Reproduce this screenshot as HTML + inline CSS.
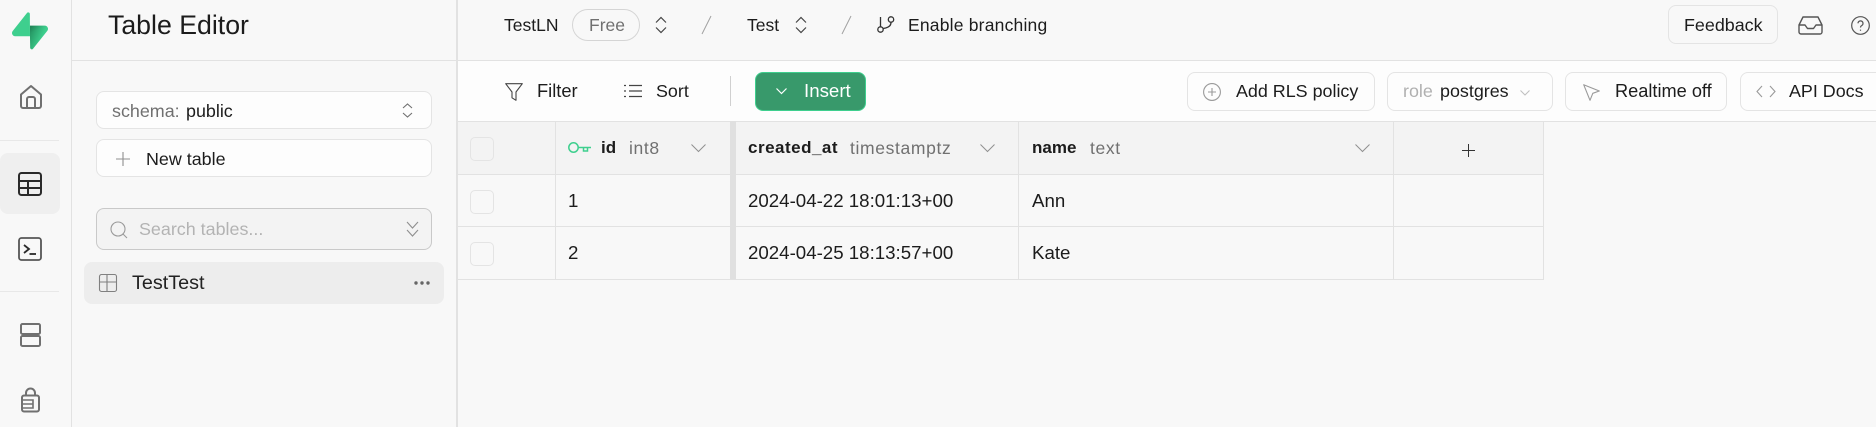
<!DOCTYPE html>
<html lang="en"><head><meta charset="utf-8"><title>Table Editor</title>
<style>
html,body{margin:0;padding:0;width:1876px;height:427px;overflow:hidden;background:#f8f8f8}
body{position:relative;font-family:"Liberation Sans",Arial,sans-serif;color:#1c1c1c;font-size:17.9px}
.a{position:absolute;box-sizing:border-box}
.t{position:absolute;white-space:nowrap;line-height:30px;height:30px}
.b{position:absolute;box-sizing:border-box;background:#fdfdfd;border:1px solid #e4e4e4;border-radius:8px}
.l{position:absolute;background:#e2e2e2}
.g{color:#707070}
.h{font-size:17.5px;letter-spacing:.64px}
.r{font-size:18.7px}
svg{position:absolute;overflow:visible;fill:none}
</style></head><body>

<!-- regions -->
<div class="a" style="left:457px;top:61px;width:1419px;height:60px;background:#fdfdfd"></div>
<div class="l" style="left:71px;top:0;width:1px;height:427px"></div>
<div class="l" style="left:456px;top:0;width:1.5px;height:427px"></div>
<div class="l" style="left:72px;top:60px;width:1804px;height:1px"></div>

<!-- nav -->
<svg style="left:12px;top:12px" width="36" height="38" viewBox="0 0 109 113">
<defs><linearGradient id="g1" x1="53.97" y1="54.97" x2="94.16" y2="71.83" gradientUnits="userSpaceOnUse"><stop stop-color="#249361"/><stop offset="1" stop-color="#3ECF8E"/></linearGradient>
<linearGradient id="g2" x1="36.15" y1="30.58" x2="54.48" y2="65.08" gradientUnits="userSpaceOnUse"><stop/><stop offset="1" stop-opacity="0"/></linearGradient></defs>
<path d="M63.7 110.3C60.8 113.9 55.05 111.9 54.98 107.3L53.97 40.06H99.19C107.38 40.06 111.95 49.52 106.86 55.94Z" fill="url(#g1)"/>
<path d="M63.7 110.3C60.8 113.9 55.05 111.9 54.98 107.3L53.97 40.06H99.19C107.38 40.06 111.95 49.52 106.86 55.94Z" fill="url(#g2)" fill-opacity=".2"/>
<path d="M45.32 2.07C48.18-1.53 53.97.44 54.04 5.04L54.48 72.29H9.83C1.64 72.29-2.93 62.83 2.17 56.42Z" fill="#3ECF8E"/>
</svg>
<svg style="left:19px;top:84px" width="24" height="26" viewBox="0 0 24 26" stroke="#707070" stroke-width="2" stroke-linejoin="round"><path d="M2 10.5 12 2l10 8.5V22a2 2 0 0 1-2 2H4a2 2 0 0 1-2-2Z"/><path d="M8 24V15a2 2 0 0 1 2-2h4a2 2 0 0 1 2 2v9"/></svg>
<div class="l" style="left:0;top:139.5px;width:59px;height:1px;background:#e8e8e8"></div>
<div class="a" style="left:0;top:153px;width:60px;height:61px;background:#efefef;border-radius:8px"></div>
<svg style="left:18px;top:172px" width="24" height="24" viewBox="0 0 24 24" stroke="#2a2a2a" stroke-width="2"><rect x="1" y="1" width="22" height="22" rx="2.5"/><path d="M1 9h22M1 16h22M10 9v14"/></svg>
<svg style="left:18px;top:237px" width="24" height="24" viewBox="0 0 24 24" stroke="#555" stroke-width="1.8"><rect x="1" y="1" width="22" height="22" rx="2.5"/><path d="m6 8 5 4-5 4" stroke="#2a2a2a"/><path d="M11.5 17H18" stroke="#2a2a2a"/></svg>
<div class="l" style="left:0;top:291px;width:59px;height:1px;background:#e8e8e8"></div>
<svg style="left:20px;top:323px" width="21" height="24" viewBox="0 0 21 24" stroke="#707070" stroke-width="2"><rect x="1" y="1" width="19" height="10" rx="1.5"/><rect x="1" y="13" width="19" height="10" rx="1.5"/></svg>
<svg style="left:21px;top:387px" width="19" height="26" viewBox="0 0 19 26" stroke="#707070" stroke-width="2"><path d="M5 9V6a4.5 4.5 0 0 1 9 0v3"/><rect x="1" y="8.500" width="17" height="16" rx="2"/><path d="M1 13h11v8H1M1 17h11" stroke-width="1.600"/></svg>

<!-- sidebar -->
<div class="t" style="left:108px;top:10px;font-size:26.7px">Table Editor</div>
<div class="b" style="left:96px;top:91px;width:336px;height:38px"></div>
<div class="t g" style="left:112px;top:96px">schema:</div>
<div class="t" style="left:186px;top:96px">public</div>
<svg style="left:402px;top:103px" width="11" height="15" viewBox="0 0 11 15" stroke="#707070" stroke-width="1.100"><path d="m1 5 4.500-4L10 5M1 10l4.500 4 4.500-4"/></svg>
<div class="b" style="left:96px;top:139px;width:336px;height:38px"></div>
<svg style="left:116px;top:152px" width="14" height="14" stroke="#8f8f8f" stroke-width="1.100"><path d="M7 0v14M0 7h14"/></svg>
<div class="t" style="left:146px;top:144px">New table</div>
<div class="b" style="left:96px;top:208px;width:336px;height:42px;background:#f3f3f3;border-color:#c9c9c9"></div>
<svg style="left:110px;top:221px" width="18" height="18" viewBox="0 0 18 18" stroke="#9a9a9a" stroke-width="1.100"><circle cx="8" cy="8" r="7"/><path d="m13 13 4 4"/></svg>
<div class="t" style="left:139px;top:214px;color:#b3b3b3">Search tables...</div>
<svg style="left:406px;top:221px" width="13" height="16" viewBox="0 0 13 16" stroke="#8f8f8f" stroke-width="1.100"><path d="m1 1 5.500 6L12 1M1 9l5.500 6L12 9"/></svg>
<div class="a" style="left:84px;top:262px;width:360px;height:42px;background:#ededed;border-radius:8px"></div>
<svg style="left:99px;top:274px" width="18" height="18" viewBox="0 0 18 18" stroke="#808080" stroke-width="1.100"><rect x=".5" y=".5" width="17" height="17" rx="2"/><path d="M.5 8h17M8 .5v17"/></svg>
<div class="t" style="left:132px;top:268px;font-size:19.800px;color:#222">TestTest</div>
<svg style="left:414px;top:281px" width="16" height="4" fill="#666"><circle cx="2" cy="2" r="1.700" fill="#666"/><circle cx="8" cy="2" r="1.700" fill="#666"/><circle cx="14" cy="2" r="1.700" fill="#666"/></svg>

<!-- top bar -->
<div class="t" style="left:504px;top:10px;font-size:17.5px">TestLN</div>
<div class="a" style="left:572px;top:9px;width:68px;height:32px;border:1px solid #d5d5d5;border-radius:16px"></div>
<div class="t g" style="left:589px;top:10px;font-size:17.5px">Free</div>
<svg style="left:655px;top:17px" width="12" height="16" viewBox="0 0 12 16" stroke="#444" stroke-width="1.200"><path d="m1 5.500 5-5 5 5M1 10.500l5 5 5-5"/></svg>
<svg style="left:702px;top:16px" width="9" height="18" stroke="#a0a0a0" stroke-width="1"><path d="M9 0 0 18"/></svg>
<div class="t" style="left:747px;top:10px;font-size:17.5px">Test</div>
<svg style="left:795px;top:17px" width="12" height="16" viewBox="0 0 12 16" stroke="#444" stroke-width="1.200"><path d="m1 5.500 5-5 5 5M1 10.500l5 5 5-5"/></svg>
<svg style="left:842px;top:16px" width="9" height="18" stroke="#a0a0a0" stroke-width="1"><path d="M9 0 0 18"/></svg>
<svg style="left:877px;top:16px" width="18" height="17" viewBox="0 0 18 17" stroke="#333" stroke-width="1.300"><circle cx="3.500" cy="13.500" r="2.700"/><circle cx="14" cy="3.500" r="2.700"/><path d="M3.500 10.500V1M14 6.500c0 4-4 5.500-8 6"/></svg>
<div class="t" style="left:908px;top:10px;font-size:17.5px;letter-spacing:.2px">Enable branching</div>
<div class="b" style="left:1668px;top:5px;width:110px;height:39px;background:#f8f8f8;border-radius:8px"></div>
<div class="t" style="left:1684px;top:10px">Feedback</div>
<svg style="left:1798px;top:16px" width="25" height="19" viewBox="0 0 25 19" stroke="#555" stroke-width="1.400" stroke-linejoin="round"><path d="M1 9 5 1h15l4 8v7a2 2 0 0 1-2 2H3a2 2 0 0 1-2-2Z"/><path d="M1 9h6l2.500 3.500h6L18 9h6"/></svg>
<svg style="left:1851px;top:16px" width="19" height="19" viewBox="0 0 19 19" stroke="#555" stroke-width="1.200"><circle cx="9.500" cy="9.500" r="8.800"/><path d="M7 7.300a2.500 2.500 0 1 1 3.800 2.200c-.9.500-1.300 1-1.300 2"/><path d="M9.500 13.600v1.200"/></svg>

<!-- toolbar -->
<svg style="left:505px;top:83px" width="18" height="18" viewBox="0 0 18 18" stroke="#444" stroke-width="1.100" stroke-linejoin="round"><path d="M.7.700h16.600L11 9v8.300L7 14.800V9Z"/></svg>
<div class="t" style="left:537px;top:76px;font-size:18.3px">Filter</div>
<svg style="left:624px;top:84px" width="18" height="14" stroke="#444" stroke-width="1.200"><path d="M5 1.500h13M5 7h13M5 12.500h13M0 1.500h2M0 7h2M0 12.500h2"/></svg>
<div class="t" style="left:656px;top:76px">Sort</div>
<div class="l" style="left:730px;top:76px;width:1px;height:30px;background:#d0d0d0"></div>
<div class="a" style="left:755px;top:72px;width:111px;height:39px;background:#38996b;border:1px solid #3ecf8e;border-radius:8px"></div>
<svg style="left:776px;top:88px" width="11" height="7" stroke="#fff" stroke-width="1.200"><path d="m.5.500 5 5 5-5"/></svg>
<div class="t" style="left:804px;top:76px;color:#fff;font-size:18.7px">Insert</div>

<div class="b" style="left:1187px;top:72px;width:188px;height:39px"></div>
<svg style="left:1203px;top:83px" width="18" height="18" viewBox="0 0 18 18" stroke="#9a9a9a" stroke-width="1.100"><circle cx="9" cy="9" r="8.400"/><path d="M9 5v8M5 9h8"/></svg>
<div class="t" style="left:1236px;top:76px">Add RLS policy</div>
<div class="b" style="left:1387px;top:72px;width:166px;height:39px"></div>
<div class="t" style="left:1403px;top:76px;color:#b0b0b0">role</div>
<div class="t" style="left:1440px;top:76px">postgres</div>
<svg style="left:1520px;top:90px" width="10" height="6" stroke="#c0c0c0" stroke-width="1.100"><path d="m.5.500 4.500 4.500L9.500.500"/></svg>
<div class="b" style="left:1565px;top:72px;width:162px;height:39px"></div>
<svg style="left:1583px;top:84px" width="17" height="17" viewBox="0 0 17 17" stroke="#9a9a9a" stroke-width="1.100" stroke-linejoin="round"><path d="M.7.700 16.300 7l-6.500 2.300L7 16.300Z"/></svg>
<div class="t" style="left:1615px;top:76px;font-size:18.2px">Realtime off</div>
<div class="b" style="left:1740px;top:72px;width:150px;height:39px"></div>
<svg style="left:1756px;top:85px" width="20" height="13" stroke="#9a9a9a" stroke-width="1.100"><path d="M6 1 1 6.500 6 12M14 1l5 5.500L14 12"/></svg>
<div class="t" style="left:1789px;top:76px">API Docs</div>

<!-- table -->
<div class="a" style="left:458px;top:122px;width:1085px;height:53px;background:#f3f3f3"></div>
<div class="l" style="left:457px;top:121px;width:1419px;height:1px"></div>
<div class="l" style="left:458px;top:174px;width:1086px;height:1px"></div>
<div class="l" style="left:458px;top:226px;width:1086px;height:1px"></div>
<div class="l" style="left:458px;top:278.500px;width:1086px;height:1px"></div>
<div class="l" style="left:555px;top:121px;width:1px;height:158px"></div>
<div class="l" style="left:730px;top:121px;width:6px;height:158px;background:#e0e0e0"></div>
<div class="l" style="left:1018px;top:121px;width:1px;height:158px"></div>
<div class="l" style="left:1393px;top:121px;width:1px;height:158px"></div>
<div class="l" style="left:1543px;top:121px;width:1px;height:158px"></div>
<div class="b" style="left:470px;top:137px;width:24px;height:24px;background:#f3f3f3;border-radius:5px"></div>
<div class="b" style="left:470px;top:190px;width:24px;height:24px;background:#f8f8f8;border-radius:5px"></div>
<div class="b" style="left:470px;top:242px;width:24px;height:24px;background:#f8f8f8;border-radius:5px"></div>

<svg style="left:568px;top:142px" width="23" height="12" viewBox="0 0 23 12" stroke="#3ecf8e" stroke-width="1.500"><circle cx="5.500" cy="5.500" r="4.700"/><path d="M10 5.500h13M15.500 5.500v3.500h4V5.500"/></svg>
<div class="t" style="left:601px;top:133px;font-size:17px;font-weight:700">id</div>
<div class="t g h" style="left:629px;top:133px">int8</div>
<svg style="left:691px;top:144px" width="15" height="8" stroke="#8f8f8f" stroke-width="1"><path d="m.5.500 7 7 7-7"/></svg>
<div class="t" style="left:748px;top:133px;font-size:17px;font-weight:700;letter-spacing:.5px">created_at</div>
<div class="t g h" style="left:850px;top:133px">timestamptz</div>
<svg style="left:980px;top:144px" width="15" height="8" stroke="#8f8f8f" stroke-width="1"><path d="m.5.500 7 7 7-7"/></svg>
<div class="t" style="left:1032px;top:133px;font-size:17px;font-weight:700">name</div>
<div class="t g h" style="left:1090px;top:133px">text</div>
<svg style="left:1355px;top:144px" width="15" height="8" stroke="#8f8f8f" stroke-width="1"><path d="m.5.500 7 7 7-7"/></svg>
<svg style="left:1461.500px;top:143.500px" width="13" height="13" stroke="#333" stroke-width="1"><path d="M6.500 0v13M0 6.500h13"/></svg>

<div class="t r" style="left:568px;top:186px">1</div>
<div class="t r" style="left:748px;top:186px">2024-04-22 18:01:13+00</div>
<div class="t r" style="left:1032px;top:186px">Ann</div>
<div class="t r" style="left:568px;top:238px">2</div>
<div class="t r" style="left:748px;top:238px">2024-04-25 18:13:57+00</div>
<div class="t r" style="left:1032px;top:238px">Kate</div>
</body></html>
